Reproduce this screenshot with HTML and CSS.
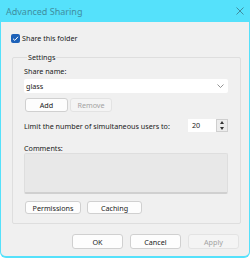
FILE: index.html
```html
<!DOCTYPE html>
<html lang="en">
<head>
    <meta charset="UTF-8">
    <title>Advanced Sharing</title>
    <link rel="stylesheet" href="styles.css">
</head>
<body>
    <div class="window">
        <div class="titlebar">
            <span class="title">Advanced Sharing</span>
            <svg class="close" width="8" height="8" viewBox="0 0 8 8">
                <path d="M0.5 0.5 L7.5 7.5 M7.5 0.5 L0.5 7.5" stroke="#3f8ea0" stroke-width="1" fill="none"/>
            </svg>
        </div>

        <div class="body">
            <div class="share-check">
                <span class="checkbox">
                    <svg width="9" height="9" viewBox="0 0 9 9">
                        <path d="M2 4.7 L3.8 6.4 L7 2.8" stroke="#fff" stroke-width="1" fill="none"/>
                    </svg>
                </span>
                <span>Share this folder</span>
            </div>

            <div class="settings">
                <span class="legend">Settings</span>

                <div class="field-label">Share name:</div>
                <div class="combo">
                    <span>glass</span>
                    <svg width="7" height="4" viewBox="0 0 7 4">
                        <path d="M0.5 0.5 L3.5 3.5 L6.5 0.5" stroke="#777" stroke-width="0.8" fill="none"/>
                    </svg>
                </div>

                <div class="btn-row">
                    <button class="btn add">Add</button>
                    <button class="btn remove disabled">Remove</button>
                </div>

                <div class="limit-row">
                    <span>Limit the number of simultaneous users to:</span>
                    <div class="spin">
                        <span class="spin-value">20</span>
                        <div class="spin-buttons">
                            <span class="arrow up"></span>
                            <span class="arrow down"></span>
                        </div>
                    </div>
                </div>

                <div class="field-label comments-label">Comments:</div>
                <div class="comments"></div>

                <div class="btn-row bottom">
                    <button class="btn permissions">Permissions</button>
                    <button class="btn caching">Caching</button>
                </div>
            </div>

            <div class="dialog-buttons">
                <button class="btn dlg">OK</button>
                <button class="btn dlg">Cancel</button>
                <button class="btn dlg disabled">Apply</button>
            </div>
        </div>
    </div>
</body>
</html>
```

FILE: styles.css
```css
* {
    margin: 0;
    padding: 0;
    box-sizing: border-box;
    font-family: 'Noto Sans', sans-serif;
}

body {
    background: #ffffff;
    width: 250px;
    height: 259px;
    overflow: hidden;
}

/* Fenster */
.window {
    width: 250px;
    height: 258px;
    background: #f0f0f0;
    border: 1px solid #55e1fb;
    border-top: none;
    border-bottom-width: 2px;
    border-radius: 0 0 6px 6px;
    display: flex;
    flex-direction: column;
}

.titlebar {
    height: 22px;
    flex-shrink: 0;
    background: #55e1fb;
    display: flex;
    align-items: center;
    justify-content: space-between;
    padding: 0 6px 0 6px;
    margin: 0 -1px;
}

.title {
    font-size: 9px;
    color: #3f8ea0;
}

.close {
    display: block;
}

.body {
    flex-grow: 1;
    padding: 11px 8px 0 11px;
    font-size: 7.2px;
    color: #1a1a1a;
}

.share-check {
    display: flex;
    align-items: center;
    gap: 2px;
    height: 10px;
    margin-left: -1px;
}

.checkbox {
    width: 9px;
    height: 9px;
    background: #1d61b8;
    border-radius: 2px;
    display: flex;
    align-items: center;
    justify-content: center;
}

/* Settings Gruppe */
.settings {
    margin-top: 14px;
    border: 1px solid #dedede;
    border-radius: 2px;
    padding: 0 12px 9px 11px;
    height: 167px;
}

.legend {
    display: block;
    width: fit-content;
    margin: -6px 0 0 3px;
    padding: 0 1px;
    line-height: 10px;
    background: #f0f0f0;
}

.field-label {
    margin-top: 4px;
    line-height: 10px;
}

.combo {
    margin-top: 3px;
    height: 14px;
    background: #ffffff;
    border-radius: 2px;
    display: flex;
    align-items: center;
    justify-content: space-between;
    padding: 0 4px 0 2px;
}

.btn-row {
    display: flex;
    gap: 2px;
    margin-top: 5px;
    padding-left: 1px;
}

.btn {
    height: 14px;
    font-size: 7.2px;
    line-height: 12px;
    color: #1a1a1a;
    background: #fdfdfd;
    border: 1px solid #d0d0d0;
    border-radius: 3px;
}

.btn.add {
    width: 43px;
}

.btn.remove {
    width: 42px;
}

.btn.disabled {
    background: #f4f4f4;
    color: #a3a3a3;
    border-color: #e3e3e3;
}

.limit-row {
    margin-top: 7px;
    display: flex;
    align-items: center;
    justify-content: space-between;
}

.spin {
    display: flex;
    height: 13px;
    width: 40px;
}

.spin-value {
    flex-grow: 1;
    background: #ffffff;
    padding-left: 4px;
    line-height: 13px;
}

.spin-buttons {
    width: 12px;
    display: flex;
    flex-direction: column;
    background: #ececec;
    border: 1px solid #cfcfcf;
}

.arrow {
    flex-grow: 1;
    display: flex;
    align-items: center;
    justify-content: center;
}

.arrow::before {
    content: "";
    border-left: 2px solid transparent;
    border-right: 2px solid transparent;
}

.arrow.up::before {
    border-bottom: 3px solid #333;
}

.arrow.down::before {
    border-top: 3px solid #333;
}

.comments-label {
    margin-top: 12px;
    line-height: 9px;
}

.comments {
    height: 41px;
    background: #e8e8e8;
    border: 1px solid #dedede;
    border-bottom: 2px solid #d0d0d0;
    border-radius: 2px;
}

.btn-row.bottom {
    margin-top: 7px;
    gap: 6px;
}

.btn.permissions {
    width: 56px;
    height: 13px;
}

.btn.caching {
    width: 55px;
    height: 13px;
}

/* Dialog Buttons */
.dialog-buttons {
    display: flex;
    justify-content: flex-end;
    gap: 7px;
    margin-top: 10px;
    padding-right: 2px;
}

.btn.dlg {
    width: 51px;
    height: 15px;
}
```
